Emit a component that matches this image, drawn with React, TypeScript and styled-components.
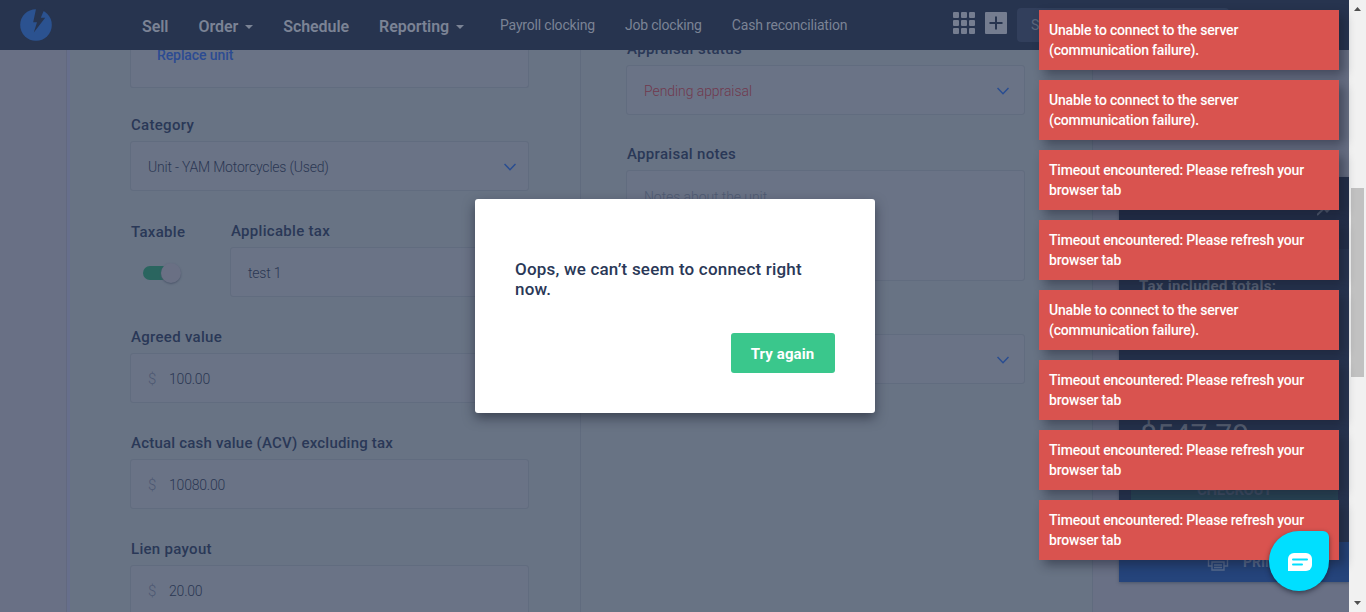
import React from "react";
import styled, { createGlobalStyle } from "styled-components";

const Global = createGlobalStyle`
  * { box-sizing: border-box; }
  body { margin: 0; overflow: hidden; font-family: Roboto, "Liberation Sans", sans-serif; color: #2a3857; }
`;

const Screen = styled.div`
  display: flex;
  width: 1366px;
  height: 612px;
  position: relative;
  overflow: hidden;
`;

const Viewport = styled.div`
  width: 1349px;
  display: flex;
  flex-direction: column;
  background: #697085;
`;

/* navigation */
const Nav = styled.header`
  height: 50px;
  flex: none;
  display: flex;
  align-items: flex-start;
  background: #27344f;
  color: #7b8395;
  position: relative;
  z-index: 1;
`;

const Logo = styled.svg`
  width: 32px;
  height: 32px;
  margin: 9px 90px 0 20px;
`;

const MainLinks = styled.nav`
  display: flex;
  gap: 30px;
  height: 53px;
  width: 322px;
  align-items: center;
`;

const MainLink = styled.a`
  display: flex;
  align-items: center;
  gap: 7px;
  font-size: 16px;
  font-weight: 600;
  letter-spacing: -0.06px;
`;

const Caret = styled.span`
  border: 4px solid transparent;
  border-top-color: currentColor;
  border-bottom: 0;
`;

const SubLinks = styled.nav`
  display: flex;
  gap: 30px;
  height: 50px;
  align-items: center;
  margin-left: 36px;
  width: 453px;
  font-size: 14px;
  letter-spacing: -0.19px;
  white-space: nowrap;
`;

const AppsGrid = styled.div`
  display: grid;
  grid-template-columns: repeat(3, 6px);
  grid-auto-rows: 6px;
  gap: 2px;
  margin-top: 12px;
  i { background: #757d90; border-radius: 1px; }
`;

const AddIcon = styled.svg`
  width: 22px;
  height: 22px;
  margin: 12px 10px 0;
`;

const Search = styled.div`
  width: 212px;
  height: 34px;
  margin-top: 8px;
  padding: 9px 14px;
  border-radius: 4px;
  background: #323f5c;
  color: #5d677d;
  font-size: 14px;
`;

/* page columns */
const Body = styled.div`
  flex: 1;
  min-height: 0;
  display: flex;
`;

const Sidebar = styled.aside`
  width: 70px;
  border-right: 3px solid #676f8c;
  box-shadow: inset -1px 0 0 #62697f;
`;

const Column = styled.section<{ $width: number; $left: number }>`
  width: ${(p) => p.$width}px;
  height: 562px;
  overflow: hidden;
  padding-left: ${(p) => p.$left}px;
  background: #687384;
  border-right: 1px solid #606b7e;
`;

/* the second column is scrolled so that its first label sits under the nav */
const ScrolledFields = styled.div`
  width: 399px;
  margin-top: -13px;
`;

const Field = styled.div<{ $gap?: number; $width?: number }>`
  width: ${(p) => p.$width ?? 399}px;
  margin-bottom: ${(p) => p.$gap ?? 28}px;
`;

const Label = styled.div<{ $track?: number; $drop?: number }>`
  height: 28px;
  padding: ${(p) => p.$drop ?? 0}px 0 0 1px;
  line-height: 25px;
  font-size: 15px;
  font-weight: 500;
  letter-spacing: ${(p) => p.$track ?? 0.3}px;
  white-space: nowrap;
`;

const Box = styled.div<{ $height?: number }>`
  height: ${(p) => p.$height ?? 50}px;
  display: flex;
  align-items: ${(p) => (p.$height ? "flex-start" : "center")};
  padding: ${(p) => (p.$height ? "18px" : "2px")} 13px 0 17px;
  border: 1px solid #616c7f;
  border-radius: 3px;
  background: #6a7386;
`;

const Value = styled.span<{ $tone?: "red" | "muted"; $track?: number }>`
  flex: 1;
  font-size: 14px;
  font-weight: 300;
  letter-spacing: ${(p) => p.$track ?? -0.2}px;
  color: ${(p) => (p.$tone === "red" ? "#71394e" : p.$tone === "muted" ? "#505b73" : "#2a3753")};
`;

const Currency = styled.span`
  width: 21px;
  font-size: 15px;
  font-weight: 300;
  color: #4d5872;
`;

const UnitCard = styled.div`
  width: 399px;
  height: 38px;
  margin-bottom: 25px;
  padding-left: 26px;
  border: 1px solid #616c7f;
  border-top: 0;
  border-radius: 0 0 3px 3px;
  background: #6a7386;
  color: #2c4b92;
  font-size: 14px;
  font-weight: 500;
  line-height: 10px;
  letter-spacing: -0.1px;
`;

const TaxRow = styled.div`
  display: flex;
  width: 399px;
`;

const Toggle = styled.div`
  width: 34px;
  height: 14px;
  margin: 19px 0 0 13px;
  border-radius: 7px;
  background: #2a655f;
  display: flex;
  align-items: center;
  justify-content: flex-end;
`;

const Knob = styled.span`
  flex: none;
  width: 20px;
  height: 20px;
  margin-right: -4px;
  border-radius: 50%;
  background: #6a7084;
  box-shadow: 0 1px 2px #4c576b;
`;

const ChevronSvg = styled.svg<{ $inset?: number }>`
  width: 12px;
  height: 8px;
  margin-right: ${(p) => p.$inset ?? -1}px;
`;

/* totals */
const Aside = styled.aside`
  flex: 1;
  padding: 127px 0 0 26px;
`;

const Totals = styled.div`
  height: 405px;
  display: flex;
  flex-direction: column;
  background: #283551;
  color: #60697c;
  box-shadow: 0 1px 3px #4b5569;
`;

const TotalsTop = styled.div`
  height: 72px;
  padding: 26px 16px 0 0;
  background: #242f4a;
  display: flex;
  justify-content: flex-end;
`;

const TotalsBody = styled.div`
  flex: 1;
  padding: 28px 11px 0 12px;
`;

const TotalsTitle = styled.div`
  padding-left: 8px;
  font-size: 15px;
  line-height: 18px;
  font-weight: 700;
  letter-spacing: 0.3px;
`;

const TotalsAmount = styled.div`
  padding-left: 9px;
  margin: 122px 0 12px;
  font-size: 30px;
  line-height: 36px;
`;

const Checkout = styled.div`
  height: 50px;
  background: #2a4657;
  color: #435268;
  text-align: center;
  font-size: 15px;
  font-weight: 700;
  line-height: 50px;
  letter-spacing: -0.3px;
`;

const Print = styled.div`
  height: 40px;
  padding-left: 88px;
  display: flex;
  align-items: center;
  gap: 14px;
  background: #25447b;
  color: #5a6d91;
  font-size: 14px;
  font-weight: 700;
`;

/* browser scrollbar */
const Scrollbar = styled.div`
  width: 17px;
  background: #f1f1f1;
  display: flex;
  flex-direction: column;
  align-items: center;
`;

const ScrollArrow = styled.svg`
  width: 17px;
  height: 17px;
`;

const Thumb = styled.div`
  width: 13px;
  height: 189px;
  margin: 171px 0 218px;
  background: #c1c1c1;
`;

/* overlays */
const Dialog = styled.div`
  position: absolute;
  z-index: 2;
  left: 475px;
  top: 199px;
  width: 400px;
  height: 214px;
  padding: 60px 40px 40px;
  display: flex;
  flex-direction: column;
  justify-content: space-between;
  align-items: flex-end;
  background: #fff;
  border-radius: 3px;
  box-shadow: 0 5px 12px rgba(30, 35, 50, 0.6);
`;

const Message = styled.p`
  margin: 0;
  width: 320px;
  font-size: 17px;
  font-weight: 500;
  line-height: 20px;
  letter-spacing: 0.2px;
`;

const RetryButton = styled.button`
  width: 104px;
  height: 40px;
  padding: 2px 1px 0 0;
  border: 0;
  border-radius: 3px;
  background: #3ac78c;
  color: #fff;
  font: 700 15px Roboto, sans-serif;
  letter-spacing: 0.1px;
`;

const Toasts = styled.div`
  position: absolute;
  z-index: 3;
  left: 1039px;
  top: 10px;
  display: flex;
  flex-direction: column;
  gap: 10px;
`;

const Toast = styled.div`
  width: 300px;
  height: 60px;
  padding: 10px;
  background: #d9534f;
  color: #fff;
  font-size: 14px;
  font-weight: 500;
  line-height: 20px;
  letter-spacing: -0.19px;
  box-shadow: 5px 5px 10px rgba(20, 25, 40, 0.45);
`;

const Chat = styled.div`
  position: absolute;
  z-index: 4;
  left: 1269px;
  top: 531px;
  width: 60px;
  height: 60px;
  display: flex;
  align-items: center;
  justify-content: center;
  border-radius: 30px 6px 30px 30px;
  background: #00dfff;
  box-shadow: 0 2px 5px rgba(20, 25, 40, 0.6);
  svg { margin: 2px 0 0 2px; }
`;

const Chevron = ({ inset }: { inset?: number }) => (
  <ChevronSvg $inset={inset} viewBox="0 0 12 8" fill="none" stroke="#294d91" strokeWidth="1.5">
    <path d="M.5 1 6 6.7 11.5 1" />
  </ChevronSvg>
);

const MoneyField = ({ label, value, track }: { label: string; value: string; track?: number }) => (
  <Field>
    <Label $track={track}>{label}</Label>
    <Box>
      <Currency>$</Currency>
      <Value>{value}</Value>
    </Box>
  </Field>
);

const UNABLE = "Unable to connect to the server (communication failure).";
const TIMEOUT = "Timeout encountered: Please refresh your browser tab";
const toasts = [UNABLE, UNABLE, TIMEOUT, TIMEOUT, UNABLE, TIMEOUT, TIMEOUT, TIMEOUT];

export default function App() {
  return (
    <Screen>
      <Global />
      <Viewport>
        <Nav>
          <Logo viewBox="0 0 32 32">
            <circle cx="16" cy="16" r="15.8" fill="#2b5290" />
            <path d="M16 0 13.2 13.3H17L13.8 23.5 25.2 8.8H20.8L24.5 0Z" fill="#27344f" />
          </Logo>
          <MainLinks>
            <MainLink>Sell</MainLink>
            <MainLink>Order <Caret /></MainLink>
            <MainLink>Schedule</MainLink>
            <MainLink>Reporting <Caret /></MainLink>
          </MainLinks>
          <SubLinks>
            <span>Payroll clocking</span>
            <span>Job clocking</span>
            <span>Cash reconciliation</span>
          </SubLinks>
          <AppsGrid>
            {Array.from({ length: 9 }, (_, i) => <i key={i} />)}
          </AppsGrid>
          <AddIcon viewBox="0 0 22 22">
            <rect width="22" height="22" rx="1" fill="#757d90" />
            <path d="M11 4.5v13M4.5 11h13" stroke="#27344f" strokeWidth="2" />
          </AddIcon>
          <Search>Search</Search>
        </Nav>
        <Body>
          <Sidebar />
          <Column $width={511} $left={60}>
            <UnitCard>Replace unit</UnitCard>
            <Field>
              <Label>Category</Label>
              <Box>
                <Value>Unit - YAM Motorcycles (Used)</Value>
                <Chevron />
              </Box>
            </Field>
            <TaxRow>
              <Field $width={100}>
                <Label $drop={1}>Taxable</Label>
                <Toggle><Knob /></Toggle>
              </Field>
              <Field $width={299}>
                <Label>Applicable tax</Label>
                <Box><Value>test 1</Value></Box>
              </Field>
            </TaxRow>
            <MoneyField label="Agreed value" value="100.00" />
            <MoneyField label="Actual cash value (ACV) excluding tax" value="10080.00" track={0.21} />
            <MoneyField label="Lien payout" value="20.00" />
          </Column>
          <Column $width={512} $left={45}>
            <ScrolledFields>
              <Field $gap={27}>
                <Label $track={0.39}>Appraisal status</Label>
                <Box>
                  <Value $tone="red" $track={-0.07}>Pending appraisal</Value>
                  <Chevron inset={2} />
                </Box>
              </Field>
              <Field $gap={53}>
                <Label>Appraisal notes</Label>
                <Box $height={111}><Value $tone="muted" $track={-0.08}>Notes about the unit</Value></Box>
              </Field>
              <Box><Value /><Chevron inset={2} /></Box>
            </ScrolledFields>
          </Column>
          <Aside>
            <Totals>
              <TotalsTop>
                <svg width="16" height="16" viewBox="0 0 16 16" fill="none" stroke="#566075" strokeWidth="2">
                  <path d="M0 12 7 5.500l3 3 5-5" />
                </svg>
              </TotalsTop>
              <TotalsBody>
                <TotalsTitle>Tax included totals:</TotalsTitle>
                <TotalsAmount>$547.79</TotalsAmount>
                <Checkout>CHECKOUT</Checkout>
              </TotalsBody>
              <Print>
                <svg width="22" height="20" viewBox="0 0 22 20" fill="none" stroke="#5a6d91" strokeWidth="1.4">
                  <path d="M5 6V1h12v5M4.500 14H1.500V6h19v8h-3M5 10h12v8H5zM7 13h8M7 15.500h8" />
                </svg>
                PRINT
              </Print>
            </Totals>
          </Aside>
        </Body>
      </Viewport>
      <Scrollbar>
        <ScrollArrow viewBox="0 0 17 17"><path d="M5 11h7L8.500 7Z" fill="#505050" /></ScrollArrow>
        <Thumb />
        <ScrollArrow viewBox="0 0 17 17"><path d="M5 6h7L8.500 10Z" fill="#505050" /></ScrollArrow>
      </Scrollbar>
      <Dialog>
        <Message>Oops, we can’t seem to connect right now.</Message>
        <RetryButton>Try again</RetryButton>
      </Dialog>
      <Toasts>
        {toasts.map((text, i) => <Toast key={i}>{text}</Toast>)}
      </Toasts>
      <Chat>
        <svg width="24" height="18" viewBox="0 0 24 18">
          <path d="M6 0h12a6 6 0 0 1 6 6v6a6 6 0 0 1-6 6H0V6a6 6 0 0 1 6-6Z" fill="#fff" />
          <path d="M5 6.500h14M5 11.500h9" stroke="#00dfff" strokeWidth="2" strokeLinecap="round" />
        </svg>
      </Chat>
    </Screen>
  );
}
